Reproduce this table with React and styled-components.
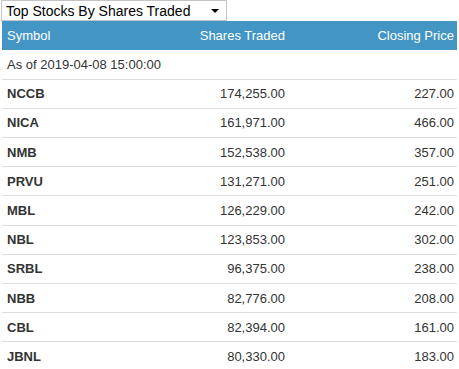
import React from 'react';
import styled, { createGlobalStyle } from 'styled-components';

const GlobalStyle = createGlobalStyle`
    body {
        margin: 0;
        background: white;
        font-family: "Liberation Sans", Arial, sans-serif;
        font-size: 13px;
        color: #333;
    }
`

const Page = styled.div`
    padding: 0 2px;
`

const SelectWrap = styled.div`
    position: relative;
    width: 226px;
    margin-left: -1px;
`

const Select = styled.select`
    appearance: none;
    width: 100%;
    height: 21px;
    border: 1px solid #c4c4c4;
    border-radius: 0;
    background: white;
    padding: 0 4px;
    font-family: "Liberation Sans", Arial, sans-serif;
    font-size: 14px;
    color: #000;
    outline: none;
`

const Caret = styled.span`
    position: absolute;
    right: 8px;
    top: 9px;
    width: 0;
    height: 0;
    border-left: 4px solid transparent;
    border-right: 4px solid transparent;
    border-top: 4px solid #000;
    pointer-events: none;
`

const Table = styled.table`
    width: 100%;
    border-collapse: collapse;
    table-layout: fixed;
`

const HeadCell = styled.th`
    background: #4396c3;
    color: white;
    font-weight: normal;
    text-align: ${p => p.$align || 'left'};
    padding: 5px 5px;
    height: 29px;
    box-sizing: border-box;
    width: ${p => p.$width || 'auto'};
    &:last-child {
        padding-right: 3px;
    }
`

const Cell = styled.td`
    text-align: ${p => p.$align || 'left'};
    font-weight: ${p => p.$bold ? 'bold' : 'normal'};
    padding: 5px 5px;
    height: 29.2px;
    box-sizing: border-box;
    border-bottom: 1px solid #dddddd;
    &:last-child {
        padding-right: 3px;
    }
`

const stocks = [
    ['NCCB', '174,255.00', '227.00'],
    ['NICA', '161,971.00', '466.00'],
    ['NMB', '152,538.00', '357.00'],
    ['PRVU', '131,271.00', '251.00'],
    ['MBL', '126,229.00', '242.00'],
    ['NBL', '123,853.00', '302.00'],
    ['SRBL', '96,375.00', '238.00'],
    ['NBB', '82,776.00', '208.00'],
    ['CBL', '82,394.00', '161.00'],
    ['JBNL', '80,330.00', '183.00'],
]

export default function App() {
    return (
        <Page>
            <GlobalStyle />
            <SelectWrap>
                <Select defaultValue="shares">
                    <option value="shares">Top Stocks By Shares Traded</option>
                    <option value="turnover">Top Stocks By Turnover</option>
                </Select>
                <Caret />
            </SelectWrap>
            <Table>
                <thead>
                    <tr>
                        <HeadCell $width="150px">Symbol</HeadCell>
                        <HeadCell $align="right" $width="138px">Shares Traded</HeadCell>
                        <HeadCell $align="right">Closing Price</HeadCell>
                    </tr>
                </thead>
                <tbody>
                    <tr>
                        <Cell colSpan={3}>As of 2019-04-08 15:00:00</Cell>
                    </tr>
                    {stocks.map(([sym, shares, price]) => (
                        <tr key={sym}>
                            <Cell $bold>{sym}</Cell>
                            <Cell $align="right">{shares}</Cell>
                            <Cell $align="right">{price}</Cell>
                        </tr>
                    ))}
                </tbody>
            </Table>
        </Page>
    )
}
